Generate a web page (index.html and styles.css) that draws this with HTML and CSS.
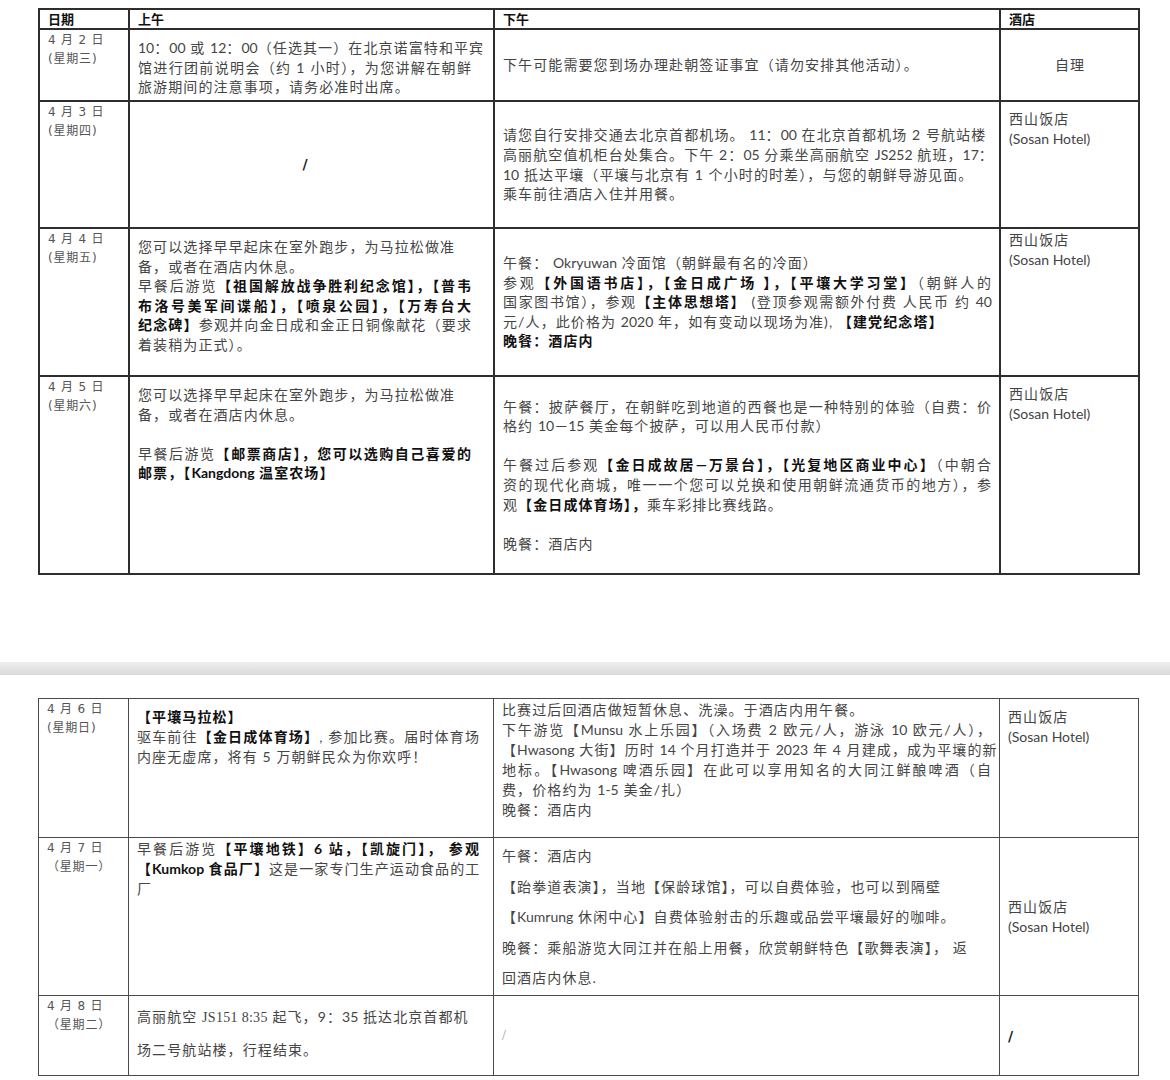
FILE: index.html
```html
<!DOCTYPE html>
<html lang="zh-CN">
<head>
<meta charset="utf-8">
<title>行程</title>
<link rel="stylesheet" href="styles.css">
</head>
<body>
<div class="page page-top">
  <table class="sched sched-a">
    <colgroup><col class="c-date"><col class="c-am"><col class="c-pm"><col class="c-hotel"></colgroup>
    <tr class="r-head">
      <th>日期</th><th>上午</th><th>下午</th><th>酒店</th>
    </tr>
    <tr class="r-a1">
      <td class="date"><span class="ln">4 月 2 日</span><span class="ln">(星期三)</span></td>
      <td class="am pt8">
        <span class="ln j"><span class="en">10</span>：<span class="en">00</span> 或 <span class="en">12</span>：<span class="en">00</span>（任选其一）在北京诺富特和平宾</span>
        <span class="ln j">馆进行团前说明会（约 1 小时），为您讲解在朝鲜</span>
        <span class="ln">旅游期间的注意事项，请务必准时出席。</span>
      </td>
      <td class="pm mid"><span class="ln">下午可能需要您到场办理赴朝签证事宜（请勿安排其他活动）。</span></td>
      <td class="hotel mid center">自理</td>
    </tr>
    <tr class="r-a2">
      <td class="date"><span class="ln">4 月 3 日</span><span class="ln">(星期四)</span></td>
      <td class="am mid center"><span class="slash">/</span></td>
      <td class="pm mid">
        <span class="ln">请您自行安排交通去北京首都机场。 <span class="en">11</span>：<span class="en">00</span> 在北京首都机场 2 号航站楼</span>
        <span class="ln">高丽航空值机柜台处集合。下午 2：<span class="en">05</span> 分乘坐高丽航空 <span class="en">JS252</span> 航班，<span class="en">17</span>：</span>
        <span class="ln"><span class="en">10</span> 抵达平壤（平壤与北京有 1 个小时的时差），与您的朝鲜导游见面。</span>
        <span class="ln">乘车前往酒店入住并用餐。</span>
      </td>
      <td class="hotel pt7"><span class="ln">西山饭店</span><span class="ln en">(Sosan Hotel)</span></td>
    </tr>
    <tr class="r-a3">
      <td class="date"><span class="ln">4 月 4 日</span><span class="ln">(星期五)</span></td>
      <td class="am pt8">
        <span class="ln">您可以选择早早起床在室外跑步，为马拉松做准</span>
        <span class="ln">备，或者在酒店内休息。</span>
        <span class="ln j">早餐后游览<b class="b">【祖国解放战争胜利纪念馆】，【普韦</b></span>
        <span class="ln j b">布洛号美军间谍船】，【喷泉公园】，【万寿台大</span>
        <span class="ln j"><b class="b">纪念碑】</b>参观并向金日成和金正日铜像献花（要求</span>
        <span class="ln">着装稍为正式）。</span>
      </td>
      <td class="pm mid">
        <span class="ln">午餐： <span class="en">Okryuwan</span> 冷面馆（朝鲜最有名的冷面）</span>
        <span class="ln j">参观<b class="b">【外国语书店】，【金日成广场 】，【平壤大学习堂】</b>（朝鲜人的</span>
        <span class="ln j">国家图书馆），参观<b class="b">【主体思想塔】</b> (登顶参观需额外付费 人民币 约 <span class="en">40</span></span>
        <span class="ln">元/人，此价格为 <span class="en">2020</span> 年，如有变动以现场为准), <b class="b">【建党纪念塔】</b></span>
        <span class="ln b">晚餐：酒店内</span>
      </td>
      <td class="hotel pt1"><span class="ln">西山饭店</span><span class="ln en">(Sosan Hotel)</span></td>
    </tr>
    <tr class="r-a4">
      <td class="date"><span class="ln">4 月 5 日</span><span class="ln">(星期六)</span></td>
      <td class="am pt8">
        <span class="ln">您可以选择早早起床在室外跑步，为马拉松做准</span>
        <span class="ln">备，或者在酒店内休息。</span>
        <span class="ln blank"></span>
        <span class="ln j">早餐后游览<b class="b">【邮票商店】，您可以选购自己喜爱的</b></span>
        <span class="ln b">邮票，【<span class="en">Kangdong</span> 温室农场】</span>
      </td>
      <td class="pm mid">
        <span class="ln j">午餐：披萨餐厅，在朝鲜吃到地道的西餐也是一种特别的体验（自费：价</span>
        <span class="ln">格约 <span class="en">10－15</span> 美金每个披萨，可以用人民币付款）</span>
        <span class="ln blank"></span>
        <span class="ln j">午餐过后参观<b class="b">【金日成故居—万景台】，【光复地区商业中心】</b>（中朝合</span>
        <span class="ln j">资的现代化商城，唯一一个您可以兑换和使用朝鲜流通货币的地方），参</span>
        <span class="ln">观<b class="b">【金日成体育场】，</b>乘车彩排比赛线路。</span>
        <span class="ln blank"></span>
        <span class="ln">晚餐：酒店内</span>
      </td>
      <td class="hotel pt7"><span class="ln">西山饭店</span><span class="ln en">(Sosan Hotel)</span></td>
    </tr>
  </table>
</div>
<div class="divider"></div>
<div class="page page-bottom">
  <table class="sched sched-b">
    <colgroup><col class="c-date"><col class="c-am"><col class="c-pm"><col class="c-hotel"></colgroup>
    <tr class="r-b1">
      <td class="date"><span class="ln">4 月 6 日</span><span class="ln">(星期日)</span></td>
      <td class="am pt8">
        <span class="ln b">【平壤马拉松】</span>
        <span class="ln j">驱车前往<b class="b">【金日成体育场】</b>, 参加比赛。届时体育场</span>
        <span class="ln">内座无虚席，将有 5 万朝鲜民众为你欢呼！</span>
      </td>
      <td class="pm pt1">
        <span class="ln">比赛过后回酒店做短暂休息、洗澡。于酒店内用午餐。</span>
        <span class="ln j">下午游览【<span class="en">Munsu</span> 水上乐园】（入场费 2 欧元/人，游泳 <span class="en">10</span> 欧元/人），</span>
        <span class="ln j">【<span class="en">Hwasong</span> 大街】历时 <span class="en">14</span> 个月打造并于 <span class="en">2023</span> 年 4 月建成，成为平壤的新</span>
        <span class="ln j">地标。【<span class="en">Hwasong</span> 啤酒乐园】在此可以享用知名的大同江鲜酿啤酒（自</span>
        <span class="ln">费，价格约为 <span class="en">1-5</span> 美金/扎）</span>
        <span class="ln">晚餐：酒店内</span>
      </td>
      <td class="hotel pt8"><span class="ln">西山饭店</span><span class="ln en">(Sosan Hotel)</span></td>
    </tr>
    <tr class="r-b2">
      <td class="date"><span class="ln">4 月 7 日</span><span class="ln">（星期一）</span></td>
      <td class="am pt1">
        <span class="ln j">早餐后游览<b class="b">【平壤地铁】6 站，【凯旋门】， 参观</b></span>
        <span class="ln j"><b class="b">【<span class="en">Kumkop</span> 食品厂】</b>这是一家专门生产运动食品的工</span>
        <span class="ln">厂</span>
      </td>
      <td class="pm pt3 tall">
        <span class="ln">午餐：酒店内</span>
        <span class="ln">【跆拳道表演】，当地【保龄球馆】，可以自费体验，也可以到隔壁</span>
        <span class="ln">【<span class="en">Kumrung</span> 休闲中心】自费体验射击的乐趣或品尝平壤最好的咖啡。</span>
        <span class="ln">晚餐：乘船游览大同江并在船上用餐，欣赏朝鲜特色【歌舞表演】， 返</span>
        <span class="ln">回酒店内休息.</span>
      </td>
      <td class="hotel mid"><span class="ln">西山饭店</span><span class="ln en">(Sosan Hotel)</span></td>
    </tr>
    <tr class="r-b3">
      <td class="date"><span class="ln">4 月 8 日</span><span class="ln">（星期二）</span></td>
      <td class="am pt5 tall2">
        <span class="ln">高丽航空 <span class="serif">JS151 8:35</span> 起飞，9：<span class="en">35</span> 抵达北京首都机</span>
        <span class="ln">场二号航站楼，行程结束。</span>
      </td>
      <td class="pm mid"><span class="slash thin">/</span></td>
      <td class="hotel mid"><span class="slash">/</span></td>
    </tr>
  </table>
</div>
</body>
</html>
```
FILE: styles.css
```css
html, body {
  margin: 0;
  padding: 0;
  background: #ffffff;
}

body {
  font-family: "Lato", "Noto Sans CJK SC", sans-serif;
}

.page-top {
  height: 662px;
  box-sizing: border-box;
  padding-top: 8px;
  background: #ffffff;
}

.divider {
  height: 13px;
  background: linear-gradient(#eeeeee, #dadada);
}

.page-bottom {
  padding-top: 23px;
  background: #ffffff;
}

.sched {
  border-collapse: collapse;
  table-layout: fixed;
  width: 1100px;
  margin-left: 38px;
  font-size: 14px;
  letter-spacing: 1.1px;
  color: #454545;
}

.c-date { width: 90px; }
.c-am { width: 365px; }
.c-pm { width: 506px; }
.c-hotel { width: 139px; }

.sched th,
.sched td {
  vertical-align: top;
  padding: 0 7px 0 8px;
  line-height: 19.6px;
  text-align: left;
}

.sched-a th,
.sched-a td {
  border: 2px solid #2e2e2e;
}

.sched-b td {
  border: 1px solid #4a4a4a;
  line-height: 20px;
}

.sched th {
  font-family: "Noto Sans CJK SC", sans-serif;
  font-size: 13px;
  font-weight: 700;
  color: #111;
  line-height: 17px;
  letter-spacing: 0;
}

.r-head { height: 20px; }
.r-a1 { height: 72px; }
.r-a2 { height: 127px; }
.r-a3 { height: 148px; }
.r-a4 { height: 198px; }
.r-b1 { height: 139px; }
.r-b2 { height: 158px; }
.r-b3 { height: 80px; }

.ln {
  display: block;
  white-space: nowrap;
}

.ln.j {
  text-align: justify;
  text-align-last: justify;
}

.blank { height: 19.6px; }

.sched-a td.am { padding-right: 21px; }
.sched-b td.am { padding-right: 13px; }
.sched td.pm { padding-right: 7px; }

.sched td.date {
  font-family: "DejaVu Sans", "Noto Sans CJK SC", sans-serif;
  font-size: 12px;
  letter-spacing: 0.8px;
  color: #555;
  line-height: 19px;
  padding-top: 1px;
}

.sched td.pt1 { padding-top: 1px; }
.sched td.pt3 { padding-top: 3px; }
.sched td.pt5 { padding-top: 5px; }
.sched td.pt7 { padding-top: 7px; }
.sched td.pt8 { padding-top: 8px; }

.sched td.mid { vertical-align: middle; }
.sched td.center { text-align: center; }

.sched-b td.tall { line-height: 30.6px; }
.sched-b td.tall2 { line-height: 32px; }

.b {
  font-weight: 700;
  color: #111;
}

.en {
  letter-spacing: 0;
}

.serif {
  font-family: "Liberation Serif", serif;
  letter-spacing: 0.3px;
}

.hotel {
  color: #444;
}

.slash {
  font-family: "DejaVu Sans", sans-serif;
  font-weight: 700;
  color: #222;
  letter-spacing: 0;
}

.slash.thin {
  font-weight: 300;
  color: #999;
  font-family: "Liberation Serif", serif;
}
```
